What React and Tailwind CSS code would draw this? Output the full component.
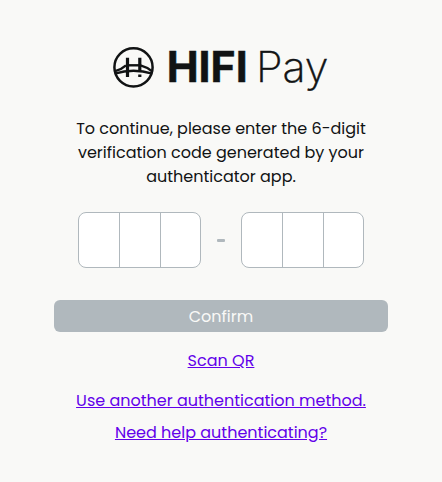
function Logo() {
  return (
    <svg className="block h-[52px] w-[218px]" viewBox="0 0 218 52" role="img" aria-label="HIFI Pay">
      <g fill="none" stroke="#111314" strokeWidth="2.4">
        <circle cx="21.5" cy="27.3" r="19.1" strokeWidth="2.5" />
        <path d="M15.5 17.7v19.3M27.8 17.7v14.3M27.8 34.4v2.6" strokeWidth="3.2" />
        <path d="M15 25.3h13" />
        <path d="M2.7 33.6Q21.5 27.8 40.3 33.6" />
        <path d="M3.2 31.2Q10 29 14 25.3M39.8 31.2Q35 27 28.5 25.3" />
      </g>
      <text x="54.7" y="42.3" textLength="81" lengthAdjust="spacingAndGlyphs" className="fill-[#111314] stroke-[#111314] stroke-[0.5px] font-['Inter',sans-serif] text-[42px] font-bold">HIFI</text>
      <text x="144" y="42.3" textLength="72.5" lengthAdjust="spacingAndGlyphs" className="fill-[#111314] stroke-[#111314] stroke-[0.5px] font-['Inter',sans-serif] text-[42px] font-extralight">Pay</text>
    </svg>
  );
}

function CodeGroup() {
  return (
    <div className="flex h-14 w-[123px] divide-x divide-[#b0b8bd] overflow-hidden rounded-lg border border-[#b0b8bd] bg-white">
      <input aria-label="Digit" className="w-[41px] min-w-0 text-center outline-none" />
      <input aria-label="Digit" className="w-[41px] min-w-0 text-center outline-none" />
      <input aria-label="Digit" className="min-w-0 flex-1 text-center outline-none" />
    </div>
  );
}

export default function App() {
  return (
    <main className="flex h-[482px] w-[442px] flex-col items-center bg-[#f9f9f7] pt-10 font-['Poppins','Inter',sans-serif] text-base leading-6 text-[#111314]">
      <Logo />
      <p className="mt-[25px] text-center">
        <span className="block">To continue, please enter the 6-digit</span>
        <span className="block">verification code generated by your</span>
        <span className="block">authenticator app.</span>
      </p>
      <div className="mt-[23px] flex items-center">
        <CodeGroup />
        <span className="mx-4 h-[3px] w-2 rounded-[1px] bg-[#b0b8bd]" />
        <CodeGroup />
      </div>
      <button className="mt-8 h-8 w-[334px] rounded-md bg-[#b0b8bd] pt-0.5 text-[#f9f9f7]">Confirm</button>
      <a href="#" className="mt-[17px] text-[#6200ea] underline">Scan QR</a>
      <a href="#" className="mt-4 text-[#6200ea] underline">Use another authentication method.</a>
      <a href="#" className="mt-2 text-[#6200ea] underline">Need help authenticating?</a>
    </main>
  );
}
